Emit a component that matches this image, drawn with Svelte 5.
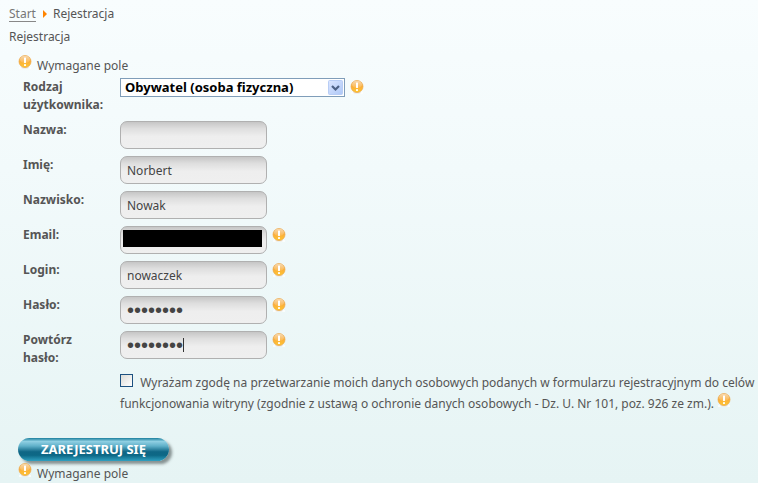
<script>
  const fields = [
    { id: 'nazwa', label: 'Nazwa:', type: 'text', value: '' },
    { id: 'imie', label: 'Imię:', type: 'text', value: 'Norbert' },
    { id: 'nazwisko', label: 'Nazwisko:', type: 'text', value: 'Nowak' },
    { id: 'email', label: 'Email:', type: 'email', value: '', required: true, masked: true },
    { id: 'login', label: 'Login:', type: 'text', value: 'nowaczek', required: true },
    { id: 'haslo', label: 'Hasło:', type: 'password', value: 'nowaczek', required: true },
    { id: 'haslo2', label: 'Powtórz hasło:', type: 'password', value: 'nowaczek', required: true, caret: true },
  ];
</script>

{#snippet mark()}
  <svg class="mark" width="14" height="14" viewBox="0 0 14 14" role="img" aria-label="Wymagane">
    <defs>
      <linearGradient id="amber" x1="0" y1="0" x2="0" y2="1">
        <stop offset="0" stop-color="#f0a848" />
        <stop offset="0.5" stop-color="#fbae38" />
        <stop offset="1" stop-color="#ffc832" />
      </linearGradient>
      <linearGradient id="gloss" x1="0" y1="0" x2="0" y2="1">
        <stop offset="0" stop-color="#fff" stop-opacity="0.55" />
        <stop offset="1" stop-color="#fff" stop-opacity="0.1" />
      </linearGradient>
    </defs>
    <rect x="1" y="12" width="12" height="2" fill="#fff" opacity="0.7" />
    <ellipse cx="7" cy="12.7" rx="4" ry="0.7" fill="#d8d2c6" opacity="0.7" />
    <circle cx="7" cy="6.5" r="6" fill="url(#amber)" stroke="#eda544" stroke-width="0.7" />
    <ellipse cx="7" cy="4.4" rx="5" ry="3.6" fill="url(#gloss)" />
    <rect x="6" y="2.5" width="2" height="5.5" rx="0.4" fill="#fff" />
    <rect x="6" y="9" width="2" height="2" rx="0.4" fill="#fff" />
  </svg>
{/snippet}

<main>
  <nav aria-label="Ścieżka">
    <a href="#start">Start</a>
    <svg width="4" height="8" viewBox="0 0 4 8" aria-hidden="true"><path d="M0 0L4 4L0 8z" fill="#ff8400" /></svg>
    <span>Rejestracja</span>
  </nav>
  <p class="title">Rejestracja</p>

  <form onsubmit={(e) => e.preventDefault()}>
    <p class="note">{@render mark()}<span>Wymagane pole</span></p>

    <div class="row kind">
      <label for="rodzaj">Rodzaj użytkownika:</label>
      <div class="control">
        <div class="picker">
          <select id="rodzaj">
            <option>Obywatel (osoba fizyczna)</option>
          </select>
          <svg class="arrow" width="15" height="15" viewBox="0 0 15 15" aria-hidden="true">
            <defs>
              <linearGradient id="blue" x1="0" y1="0" x2="1" y2="1">
                <stop offset="0" stop-color="#dce6ff" />
                <stop offset="1" stop-color="#aec8f7" />
              </linearGradient>
            </defs>
            <rect x="0.5" y="0.5" width="14" height="14" rx="1" fill="url(#blue)" stroke="#b8cdf5" />
            <path d="M4 6L7.5 9.5L11 6" fill="none" stroke="#4d6185" stroke-width="2.2" />
          </svg>
        </div>
        {@render mark()}
      </div>
    </div>

    {#each fields as f}
      <div class="row">
        <label for={f.id}>{f.label}</label>
        <div class="control">
          <div class="box">
            <input class="field" id={f.id} type={f.type} value={f.value} />
            {#if f.masked}<span class="mask"></span>{/if}
            {#if f.caret}<span class="caret"></span>{/if}
          </div>
          {#if f.required}{@render mark()}{/if}
        </div>
      </div>
    {/each}

    <div class="consent">
      <input type="checkbox" id="zgoda" />
      <label for="zgoda">Wyrażam zgodę na przetwarzanie moich danych osobowych podanych w formularzu rejestracyjnym do celów funkcjonowania witryny (zgodnie z ustawą o ochronie danych osobowych - Dz. U. Nr 101, poz. 926 ze zm.).</label>
      {@render mark()}
    </div>

    <button type="submit">ZAREJESTRUJ SIĘ</button>
    <p class="note">{@render mark()}<span>Wymagane pole</span></p>
  </form>
</main>

<style>
  :global(html) {
    min-height: 100%;
    background: linear-gradient(#f8fdfe, #f2fafb 35%, #e6f4f4);
  }
  main {
    padding: 5px 0 0 9px;
    font: 12px/18px "Trebuchet MS", "Noto Sans", sans-serif;
    color: #555;
  }
  p { margin: 0; }
  nav {
    display: flex;
    align-items: center;
    gap: 7px;
  }
  nav a {
    color: #777;
    line-height: 15px;
    text-decoration: none;
    border-bottom: 1px solid #888;
  }
  nav span { margin-left: -1px; }
  .title { margin-top: 5px; }
  form { padding: 9px 0 0 9px; }
  .mark { flex: none; display: block; }
  .note {
    display: flex;
    align-items: flex-start;
    gap: 5px;
    height: 23px;
  }
  .note:last-child { height: 20px; }
  .note span { margin-top: 2px; }
  .row {
    display: grid;
    grid-template-columns: 97px 1fr;
    padding-left: 5px;
    min-height: 35px;
  }
  .kind { min-height: 43px; }
  .row label { font-weight: bold; width: 84px; height: 35px; }
  .control {
    display: flex;
    align-items: flex-start;
    gap: 5px;
  }
  .control > .mark { margin-top: 2px; }
  .box, .picker { position: relative; }
  .picker { width: 225px; }
  select {
    display: block;
    appearance: none;
    box-sizing: border-box;
    width: 100%;
    height: 19px;
    padding: 0 4px;
    border: 1px solid #7f9db9;
    border-radius: 0;
    background: #fff;
    font: bold 13px/17px "Trebuchet MS", "Noto Sans", sans-serif;
    color: #000;
  }
  .arrow {
    position: absolute;
    right: 2px;
    top: 2px;
    pointer-events: none;
  }
  .field {
    display: block;
    box-sizing: border-box;
    width: 147px;
    height: 28px;
    padding: 0 6px;
    border: 1px solid #b0b0b0;
    border-radius: 7px;
    background: linear-gradient(#c6c6c6, #dedede 25%, #eee 55%, #efefef);
    font: 12px/18px "Trebuchet MS", "Noto Sans", sans-serif;
    color: #444;
  }
  .field[type='password'] { font: 20px/24px "Liberation Sans", Arial, sans-serif; }
  .mask {
    position: absolute;
    left: 3px;
    top: 4px;
    width: 139px;
    height: 17px;
    background: #000;
  }
  .caret {
    position: absolute;
    left: 63px;
    top: 7px;
    width: 1px;
    height: 14px;
    background: #333;
  }
  .consent {
    margin: 6px 0 0 102px;
    line-height: 21px;
  }
  .consent input {
    appearance: none;
    box-sizing: border-box;
    width: 13px;
    height: 13px;
    margin: 0 4px 0 0;
    border: 1px solid #1c5180;
    background: linear-gradient(135deg, #dcdcd7, #fff);
    vertical-align: 0;
  }
  .consent .mark { display: inline-block; vertical-align: 1px; }
  button {
    display: block;
    width: 151px;
    height: 23px;
    margin: 24px 0 2px;
    padding: 0;
    border: 0;
    border-radius: 12px;
    background: linear-gradient(#1b7f9d, #8fcfe2 15%, #5fb0c9 35%, #0f6685 60%, #0d6886 75%, #2fa0c0);
    box-shadow: 3px 3px 3px rgba(70, 80, 80, 0.6);
    font: bold 13px/23px "Trebuchet MS", "Noto Sans", sans-serif;
    color: #fff;
  }
</style>
